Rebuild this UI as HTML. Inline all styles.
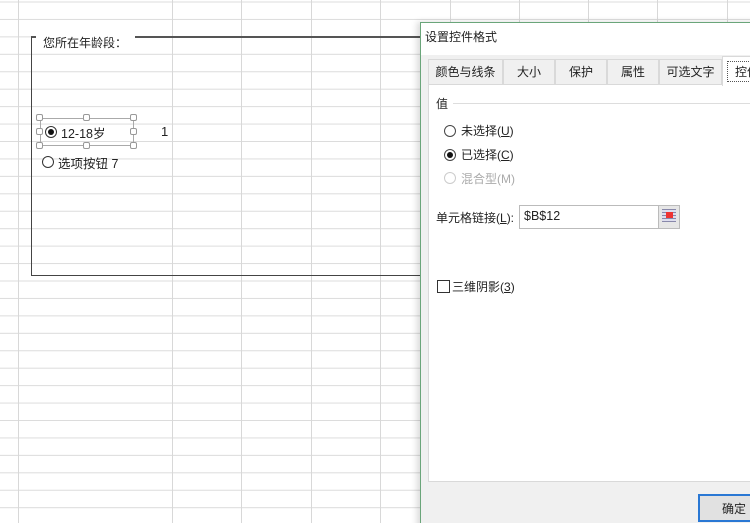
<!DOCTYPE html>
<html><head><meta charset="utf-8"><style>
*{margin:0;padding:0;box-sizing:border-box}
html,body{width:750px;height:523px;overflow:hidden}
body{position:relative;background:#fff;font-family:"Liberation Sans","Noto Sans CJK SC",sans-serif;font-size:12px;color:#222}
.grid{position:absolute;left:0;top:0;width:750px;height:523px;background-image:linear-gradient(to bottom,#dcdcdc 1px,transparent 1px);background-size:100% 17.45px;background-position:0 1.5px}
.v{position:absolute;top:0;width:1px;height:523px;background:#d8d8d8}
.abs{position:absolute}
.radio{position:absolute;width:12px;height:12px;border:1px solid #333;border-radius:50%;background:#fff}
.radio.on::after{content:"";position:absolute;left:2px;top:2px;width:6px;height:6px;border-radius:50%;background:#111}
.h{position:absolute;width:7px;height:7px;border:1px solid #999;background:#fff;border-radius:2px}
.tab{position:absolute;top:59px;height:25px;background:#f0f0f0;border:1px solid #d9d9d9;border-bottom:none;text-align:center;line-height:24px;font-size:12px}
</style></head><body>
<div class="grid"></div>
<div class="v" style="left:18px"></div><div class="v" style="left:172px"></div><div class="v" style="left:241px"></div><div class="v" style="left:311px"></div><div class="v" style="left:380px"></div><div class="v" style="left:450px"></div><div class="v" style="left:519px"></div><div class="v" style="left:588px"></div><div class="v" style="left:657px"></div><div class="v" style="left:727px"></div>
<div class="abs" style="left:31px;top:36px;width:392px;height:240px;border:1px solid #444;border-top:2px solid #555;background:transparent"></div>
<div class="abs" style="left:36px;top:33px;width:99px;height:14px;background:#fff"></div>
<div class="abs" style="left:43px;top:34px;font-size:12px">您所在年龄段：</div>
<div class="abs" style="left:40px;top:118px;width:94px;height:28px;border:1px solid #aaa"></div>
<div class="h" style="left:36px;top:114px"></div><div class="h" style="left:83px;top:114px"></div><div class="h" style="left:130px;top:114px"></div>
<div class="h" style="left:36px;top:128px"></div><div class="h" style="left:130px;top:128px"></div>
<div class="h" style="left:36px;top:142px"></div><div class="h" style="left:83px;top:142px"></div><div class="h" style="left:130px;top:142px"></div>
<div class="radio on" style="left:45px;top:126px"></div>
<div class="abs" style="left:61px;top:123px;font-size:12.5px">12-18岁</div>
<div class="abs" style="left:161px;top:124px;font-size:13px">1</div>
<div class="radio" style="left:42px;top:156px"></div>
<div class="abs" style="left:58px;top:153px;font-size:12.5px">选项按钮 7</div>

<div class="abs" style="left:420px;top:22px;width:340px;height:510px;background:#f0f0f0;border:1px solid #6aa57a;box-shadow:-3px 0 6px rgba(0,0,0,.15)"></div>
<div class="abs" style="left:421px;top:23px;width:340px;height:32px;background:#fff"></div>
<div class="abs" style="left:425px;top:28px;font-size:12px">设置控件格式</div>
<div class="tab" style="left:428px;width:75px">颜色与线条</div>
<div class="tab" style="left:503px;width:52px">大小</div>
<div class="tab" style="left:555px;width:52px">保护</div>
<div class="tab" style="left:607px;width:52px">属性</div>
<div class="tab" style="left:659px;width:63px">可选文字</div>
<div class="abs" style="left:428px;top:84px;width:330px;height:398px;background:#fff;border:1px solid #d9d9d9"></div>
<div class="tab" style="left:722px;top:56px;width:40px;height:30px;background:#fff;border-bottom:none;line-height:30px;text-align:left;padding-left:12px">控件</div>
<div class="abs" style="left:727px;top:61px;width:30px;height:21px;border:1px dotted #555"></div>
<div class="abs" style="left:436px;top:95px">值</div>
<div class="abs" style="left:453px;top:103px;width:300px;height:1px;background:#ddd"></div>
<div class="radio" style="left:444px;top:125px;border-color:#444"></div>
<div class="abs" style="left:461px;top:122px">未选择(<u>U</u>)</div>
<div class="radio on" style="left:444px;top:149px;border-color:#444"></div>
<div class="abs" style="left:461px;top:146px">已选择(<u>C</u>)</div>
<div class="radio" style="left:444px;top:172px;border-color:#ccc"></div>
<div class="abs" style="left:461px;top:170px;color:#aaa">混合型(M)</div>
<div class="abs" style="left:436px;top:209px">单元格链接(<u>L</u>):</div>
<div class="abs" style="left:519px;top:205px;width:140px;height:24px;border:1px solid #bbb;background:#fff;padding:3px 0 0 4px;font-size:12.5px">$B$12</div>
<div class="abs" style="left:658px;top:205px;width:22px;height:24px;border:1px solid #bbb;background:#e6e6e6"></div>
<div class="abs" style="left:662px;top:209px;width:14px;height:13px;background:repeating-linear-gradient(#88a 0 1px,#dde 1px 3px)"></div>
<div class="abs" style="left:666px;top:212px;width:7px;height:6px;background:#e33"></div>
<div class="abs" style="left:437px;top:280px;width:13px;height:13px;border:1px solid #333;background:#fff"></div>
<div class="abs" style="left:452px;top:278px">三维阴影(<u>3</u>)</div>
<div class="abs" style="left:698px;top:494px;width:60px;height:28px;border:2px solid #2a78d4;background:#e1e1e1;padding:4px 0 0 22px">确定</div>
</body></html>
